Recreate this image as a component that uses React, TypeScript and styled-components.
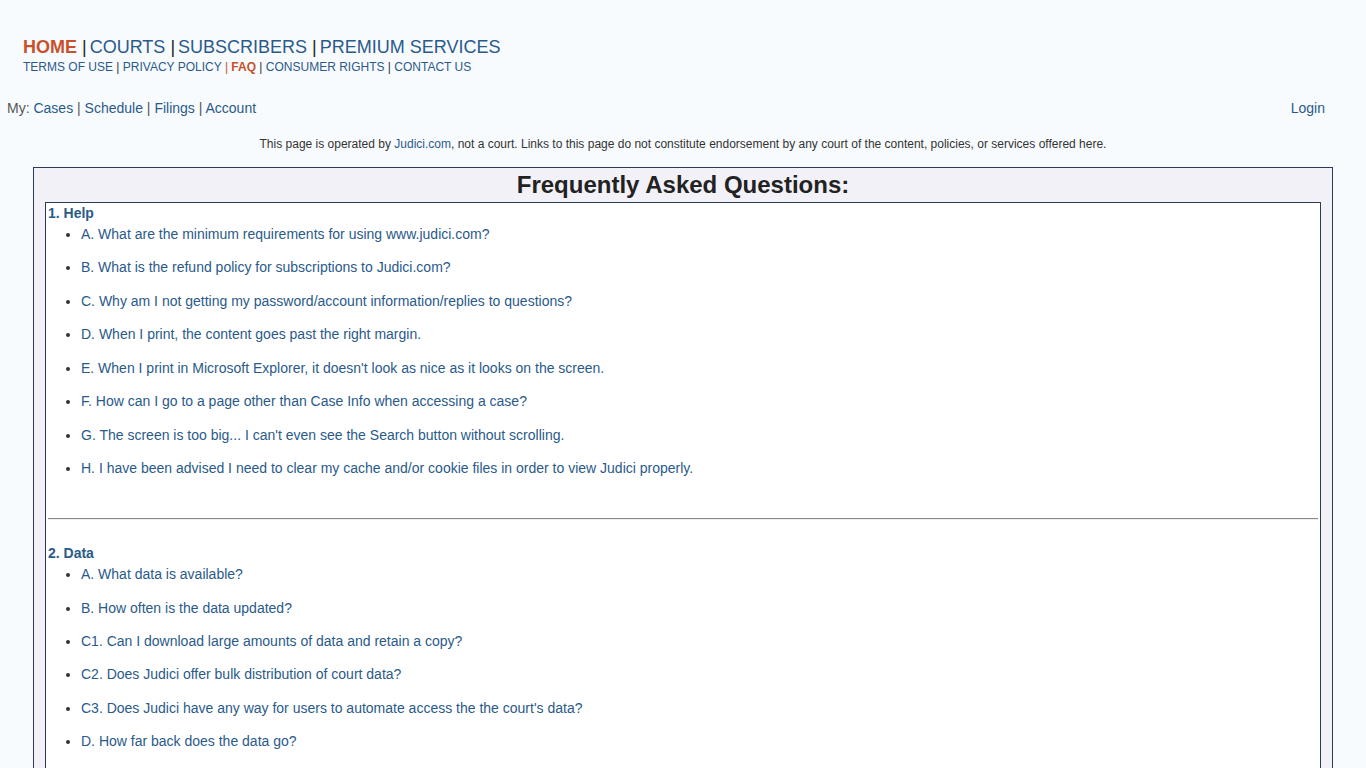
import { FC } from "react";
import styled, { createGlobalStyle } from "styled-components";

const GlobalStyle = createGlobalStyle`
    body {
        margin: 0;
        background: #f8fbfe;
        font-family: "Liberation Sans", Arial, sans-serif;
        color: #333;
    }
`

const Page = styled.div`
    display: flex;
    flex-direction: column;
    min-height: 768px;
`
const Header = styled.header`
    display: flex;
    flex-direction: column;
    gap: 2px;
    padding: 37px 0 0 23px;
`
const MainNav = styled.nav`
    font-size: 18px;
    line-height: 21px;
    color: #222;
`
const SubNav = styled.nav`
    font-size: 12px;
    line-height: 14px;
    color: #333;
`
const NavLink = styled.a<{ $active?: boolean }>`
    color: ${p => p.$active ? "#c8502a" : "#2a5a8a"};
    font-weight: ${p => p.$active ? "bold" : "normal"};
    text-decoration: none;
`
const MainSep = styled.span`
    padding: 0 3px 0 5px;
`
const Pipe = styled.span<{ $accent?: boolean }>`
    color: ${p => p.$accent ? "#c8502a" : "inherit"};
`
const UserBar = styled.div`
    display: flex;
    justify-content: space-between;
    padding: 26px 41px 0 7px;
    font-size: 14px;
    line-height: 16px;
    color: #555;
`
const Disclaimer = styled.p`
    margin: 21px 0 0;
    text-align: center;
    font-size: 12px;
    line-height: 14px;
    color: #333;

    a {
        color: #2a5a8a;
        text-decoration: none;
    }
`
const FaqBox = styled.section`
    margin: 16px 33px 0;
    border: 1px solid #2b3a55;
    border-bottom: none;
    background: #f2f1f8;
    padding: 0 11px;
    display: flex;
    flex-direction: column;
`
const Title = styled.h1`
    margin: 0;
    text-align: center;
    font-size: 24px;
    line-height: 34px;
    font-weight: bold;
    color: #222;
`
const Inner = styled.div`
    border: 1px solid #2b3a55;
    border-bottom: none;
    background: #fff;
    padding: 2px 2px 10px;
`
const SectionTitle = styled.div`
    font-size: 14px;
    font-weight: bold;
    line-height: 16px;
    color: #2a5a8a;
`
const QuestionList = styled.ul`
    margin: 5px 0 0;
    padding-left: 33px;
    font-size: 14px;
    line-height: 16px;
    color: #333;
`
const Question = styled.li`
    margin-bottom: 17.45px;

    a {
        color: #2a5a8a;
        text-decoration: none;
    }
`
const Divider = styled.hr`
    margin: 42px 0 25px;
    border: none;
    border-top: 1px solid #888;
    border-bottom: 1px solid #eee;
`

const help = [
    "A. What are the minimum requirements for using www.judici.com?",
    "B. What is the refund policy for subscriptions to Judici.com?",
    "C. Why am I not getting my password/account information/replies to questions?",
    "D. When I print, the content goes past the right margin.",
    "E. When I print in Microsoft Explorer, it doesn't look as nice as it looks on the screen.",
    "F. How can I go to a page other than Case Info when accessing a case?",
    "G. The screen is too big... I can't even see the Search button without scrolling.",
    "H. I have been advised I need to clear my cache and/or cookie files in order to view Judici properly.",
]

const data = [
    "A. What data is available?",
    "B. How often is the data updated?",
    "C1. Can I download large amounts of data and retain a copy?",
    "C2. Does Judici offer bulk distribution of court data?",
    "C3. Does Judici have any way for users to automate access the the court's data?",
    "D. How far back does the data go?",
]

const App: FC = () => {
    return (
        <Page>
            <GlobalStyle />
            <Header>
                <MainNav>
                    <NavLink $active href="#">HOME</NavLink><MainSep>|</MainSep><NavLink href="#">COURTS</NavLink><MainSep>|</MainSep><NavLink href="#">SUBSCRIBERS</NavLink><MainSep>|</MainSep><NavLink href="#">PREMIUM SERVICES</NavLink>
                </MainNav>
                <SubNav>
                    <NavLink href="#">TERMS OF USE</NavLink> | <NavLink href="#">PRIVACY POLICY</NavLink> <Pipe $accent>|</Pipe> <NavLink $active href="#">FAQ</NavLink> | <NavLink href="#">CONSUMER RIGHTS</NavLink> | <NavLink href="#">CONTACT US</NavLink>
                </SubNav>
            </Header>

            <UserBar>
                <div>
                    My: <NavLink href="#">Cases</NavLink> | <NavLink href="#">Schedule</NavLink> | <NavLink href="#">Filings</NavLink> | <NavLink href="#">Account</NavLink>
                </div>
                <NavLink href="#">Login</NavLink>
            </UserBar>

            <Disclaimer>
                This page is operated by <a href="#">Judici.com</a>, not a court. Links to this page do not constitute endorsement by any court of the content, policies, or services offered here.
            </Disclaimer>

            <FaqBox>
                <Title>Frequently Asked Questions:</Title>
                <Inner>
                    <SectionTitle>1. Help</SectionTitle>
                    <QuestionList>
                        {help.map(q => <Question key={q}><a href="#">{q}</a></Question>)}
                    </QuestionList>
                    <Divider />
                    <SectionTitle>2. Data</SectionTitle>
                    <QuestionList>
                        {data.map(q => <Question key={q}><a href="#">{q}</a></Question>)}
                    </QuestionList>
                </Inner>
            </FaqBox>
        </Page>
    )
}

export default App;
